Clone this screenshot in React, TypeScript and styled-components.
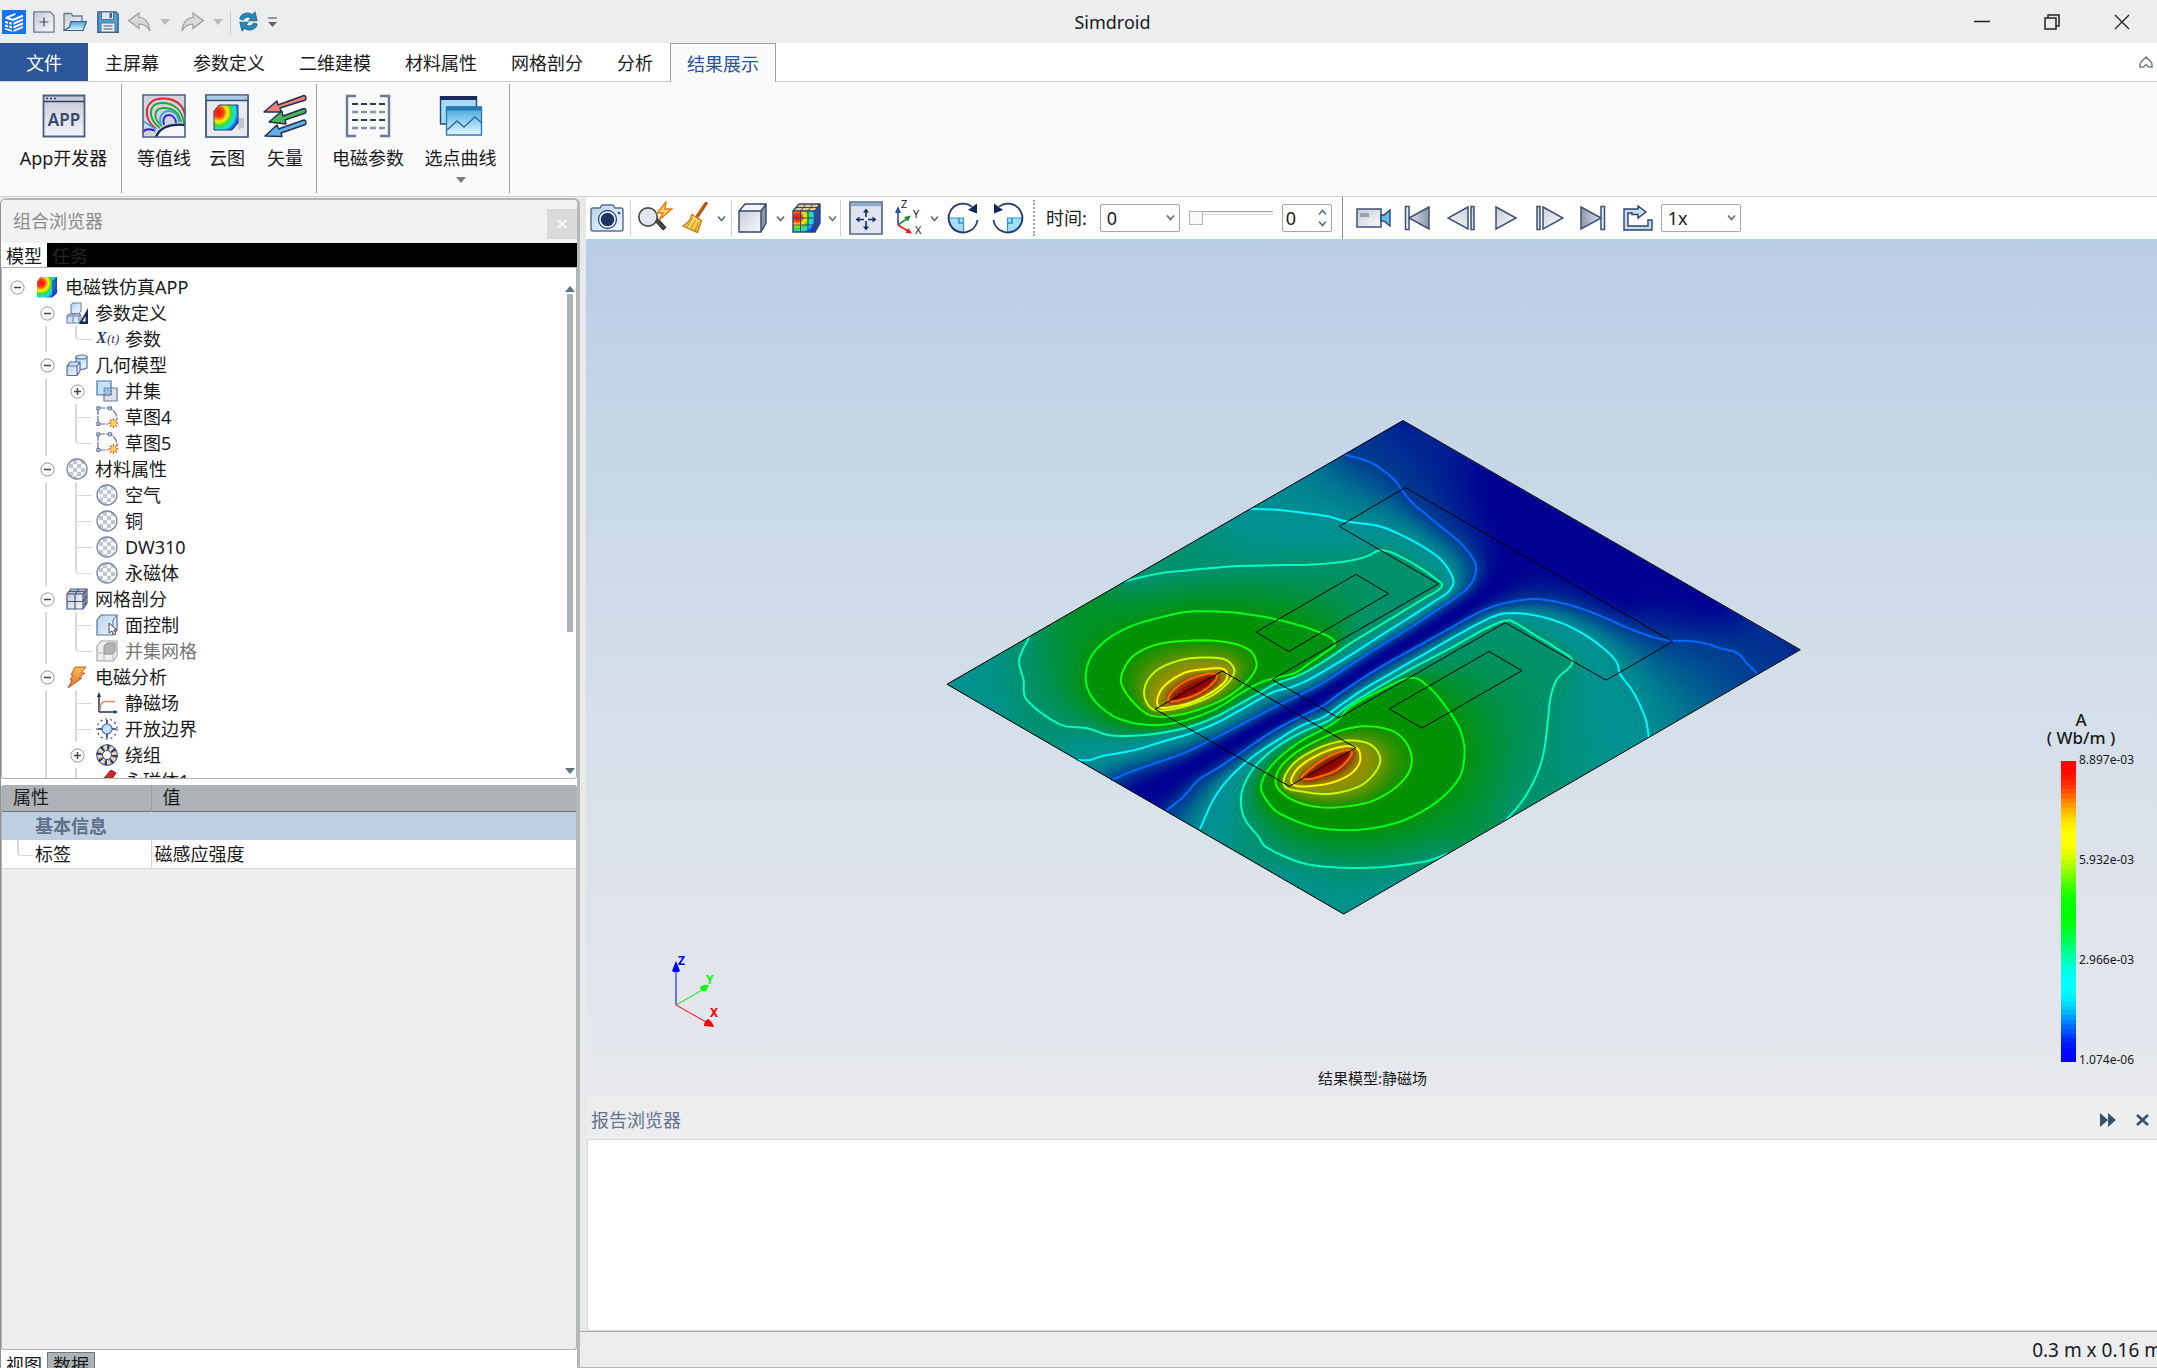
import React, { useLayoutEffect, useRef, useState } from 'react';
import styled, { createGlobalStyle } from 'styled-components';

const GlobalStyle = createGlobalStyle`
  * { box-sizing: border-box; }
  html, body, #root { height: 100%; }
  body {
    margin: 0;
    overflow: hidden;
    font-family: "Noto Sans", "Noto Sans CJK SC", sans-serif;
    font-size: 18px;
    line-height: 26px;
    color: #1a1a1a;
    background: #ecedef;
  }
  button, input, select { font: inherit; color: inherit; margin: 0; padding: 0; }
  button { border: 0; background: none; white-space: nowrap; }
  ul { list-style: none; margin: 0; padding: 0; }
  svg { display: block; flex: none; }
`;

/* ---------- window frame ---------- */

const Window = styled.div`
  display: flex;
  flex-direction: column;
  height: 100vh;
  overflow: hidden;
`;

const TitleBar = styled.header`
  display: flex;
  align-items: center;
  height: 43px;
  flex: none;
  background: #ecedef;
`;

const QuickAccess = styled.div`
  display: flex;
  align-items: center;
  width: 278px;
  height: 100%;
  padding-left: 2px;
`;

const QuickButton = styled.button<{ $width: number }>`
  display: flex;
  align-items: center;
  width: ${(p) => p.$width}px;
  height: 32px;
`;

const QuickDivider = styled.span`
  width: 1px;
  height: 24px;
  margin: 0 8px 0 4px;
  background: #cfcfcf;
`;

const WindowTitle = styled.h1`
  flex: 1;
  margin: 0;
  text-align: center;
  font-size: 18px;
  font-weight: 400;
`;

const WindowControls = styled.div`
  display: flex;
`;

const WindowControl = styled.button`
  display: grid;
  place-items: center;
  width: 70px;
  height: 43px;
`;

const TabStrip = styled.nav`
  display: flex;
  height: 39px;
  flex: none;
  background: #fff;
  border-bottom: 1px solid #d0d0d0;
`;

const FileTab = styled.button`
  width: 88px;
  height: 38px;
  padding-top: 2px;
  background: #2b579a;
  color: #fff;
`;

const RibbonTab = styled.button<{ $active?: boolean }>`
  height: ${(p) => (p.$active ? 39 : 38)}px;
  padding: 2px ${(p) => (p.$active ? 16 : 17)}px 0;
  ${(p) =>
    p.$active &&
    `
    color: #2b579a;
    background: #fafafa;
    border: 1px solid #a0a0a0;
    border-bottom: 0;
  `}
`;

const CollapseButton = styled.button`
  margin-left: auto;
  padding: 0 4px 0 8px;
`;

const Ribbon = styled.div`
  display: flex;
  height: 115px;
  flex: none;
  padding-top: 2px;
  background: #fafafa;
  border-bottom: 1px solid #d0d0d0;
`;

const RibbonGroup = styled.div<{ $gap?: number }>`
  display: flex;
  gap: ${(p) => p.$gap ?? 2}px;
  height: 109px;
  padding: 0 3px 0 9px;
  border-right: 1px solid #a0a0a0;
`;

const RibbonButton = styled.button<{ $width?: number }>`
  display: flex;
  flex-direction: column;
  align-items: center;
  min-width: ${(p) => p.$width ?? 56}px;
  padding: 10px 6px 0;
  svg + span { margin-top: 7px; }
  span + svg { margin-top: 6px; }
`;

const Body = styled.div`
  display: flex;
  flex: 1;
  min-height: 0;
`;

/* ---------- left dock ---------- */

const Dock = styled.aside`
  display: flex;
  flex-direction: column;
  width: 580px;
  flex: none;
  margin-top: 1px;
  background: #fff;
  border: 2px solid #b6b7b9;
  border-right-width: 3px;
  border-bottom: 0;
  border-left: 1px solid #8f9092;
  border-radius: 6px 6px 0 0;
  overflow: hidden;
`;

const DockHeader = styled.div`
  display: flex;
  align-items: center;
  justify-content: space-between;
  height: 43px;
  flex: none;
  padding: 0 0 2px 12px;
  background: #f2f2f2;
  color: #8c8c8c;
`;

const DockClose = styled.button`
  display: grid;
  place-items: center;
  width: 30px;
  height: 30px;
  margin-top: 6px;
  background: #dadada;
`;

const DockTabs = styled.div`
  display: flex;
  height: 24px;
  flex: none;
  background: #000;
`;

const DockTab = styled.button<{ $active?: boolean }>`
  height: 24px;
  padding: 0 5px;
  color: ${(p) => (p.$active ? '#1a1a1a' : '#242424')};
  background: ${(p) => (p.$active ? '#fff' : '#000')};
`;

const TreePane = styled.div`
  display: flex;
  height: 512px;
  flex: none;
  border: 1px solid #b2b2b2;
  border-radius: 0 0 3px 3px;
  overflow: hidden;
`;

const TreeList = styled.ul`
  flex: 1;
  padding-top: 6px;
`;

const TreeRow = styled.li<{ $dim?: boolean }>`
  display: flex;
  align-items: center;
  height: 26px;
  color: ${(p) => (p.$dim ? '#747474' : '#1a1a1a')};
`;

const TreeIcon = styled.span`
  display: grid;
  place-items: center;
  width: 22px;
  margin: 0 7px 0 4px;
`;

const Guide = styled.span<{ $kind: 'none' | 'line' | 'tee' }>`
  width: 30px;
  height: 26px;
  background-repeat: no-repeat;
  ${(p) =>
    p.$kind === 'line' &&
    `background-image: linear-gradient(#dadada, #dadada); background-size: 2px 100%; background-position: 13px 0;`}
  ${(p) =>
    p.$kind === 'tee' &&
    `background-image: linear-gradient(#dadada, #dadada), linear-gradient(#dadada, #dadada);
     background-size: 2px 100%, 16px 1px; background-position: 13px 0, 14px 13px;`}
`;

const Elbow = styled.span`
  width: 17px;
  height: 14px;
  margin: 0 0 12px 13px;
  border-left: 2px solid #dadada;
  border-bottom: 1px solid #dadada;
  border-bottom-left-radius: 4px;
`;

const ToggleCell = styled.button`
  display: grid;
  place-items: center;
  width: 30px;
  height: 26px;
`;

const ScrollRail = styled.div`
  display: flex;
  flex-direction: column;
  align-items: center;
  width: 13px;
  padding: 18px 0 4px;
`;

const ScrollThumb = styled.div`
  width: 6px;
  height: 338px;
  margin: 2px 0 auto;
  background: #adb2b6;
`;

const PropertyPane = styled.div`
  flex: 1;
  min-height: 0;
  margin-top: 6px;
  background: #ecedef;
  border: 1px solid #b2b5b7;
  border-top: 0;
  border-radius: 3px;
`;

const PropertyTable = styled.table`
  width: 100%;
  border-collapse: collapse;
  table-layout: fixed;
  text-align: left;
  th, td { padding: 0; font-weight: 400; }
  thead tr { height: 26px; background: #adb2b6; border-bottom: 1px solid #74787b; }
  thead th { padding: 0 11px; line-height: 25px; }
  thead th + th { border-left: 1px solid #979c9f; }
  tbody td { border-bottom: 1px solid #d4d4d4; background: #fff; padding: 0 3px; line-height: 28px; }
  tbody td + td { border-left: 1px solid #d4d4d4; }
`;

const NameColumn = styled.col`
  width: 149px;
`;

const SectionCell = styled.th`
  && {
    padding: 0 33px;
    line-height: 28px;
    font-weight: 700;
    color: #5f7089;
    background: #bdcfe0;
  }
`;

const BranchLabel = styled.span`
  display: flex;
  height: 28px;
  gap: 2px;
`;

const BranchElbow = styled.span`
  width: 16px;
  height: 16px;
  margin-left: 12px;
  border-left: 2px solid #dadada;
  border-bottom: 1px solid #dadada;
  border-bottom-left-radius: 4px;
`;

const BottomTabs = styled.div`
  display: flex;
  align-items: flex-start;
  height: 18px;
  flex: none;
  padding-top: 2px;
  overflow: hidden;
`;

const BottomTab = styled.button<{ $active?: boolean }>`
  height: 26px;
  line-height: 24px;
  padding: 0 5px;
  ${(p) => p.$active && `background: #adb2b6; border: 1px solid #74787b;`}
`;

/* ---------- right area ---------- */

const Stage = styled.main`
  display: flex;
  flex-direction: column;
  flex: 1;
  min-width: 0;
`;

const StageInner = styled.div`
  display: flex;
  flex-direction: column;
  flex: 1;
  min-height: 0;
  padding-left: 6px;
  background: #e8e9eb;
`;

const Toolbar = styled.div`
  display: flex;
  align-items: center;
  height: 42px;
  flex: none;
  background: #fff;
`;

const Tool = styled.button<{ $width?: number }>`
  display: grid;
  place-items: center;
  width: ${(p) => p.$width ?? 42}px;
  height: 40px;
`;

const Divider = styled.span<{ $dotted?: boolean; $tall?: boolean }>`
  width: 1px;
  height: ${(p) => (p.$tall ? 42 : 36)}px;
  margin: 0 ${(p) => (p.$tall ? 10 : 2)}px;
  border-left: ${(p) => (p.$dotted ? '2px dotted #a0a0a0' : p.$tall ? '1px solid #8c8c8c' : '1px solid #cfcfcf')};
`;

const TimeLabel = styled.label`
  margin: 0 13px 0 9px;
`;

const SelectBox = styled.span`
  position: relative;
  width: 80px;
  height: 28px;
  svg { position: absolute; right: 5px; top: 10px; pointer-events: none; }
`;

const Select = styled.select`
  appearance: none;
  width: 100%;
  height: 100%;
  padding: 0 6px;
  border: 1px solid #a6a6a6;
  border-radius: 2px;
  background: #fff;
`;

const Slider = styled.input`
  appearance: none;
  width: 84px;
  height: 20px;
  margin: 0 9px;
  background: none;
  &::-webkit-slider-runnable-track {
    height: 14px;
    border-top: 1px solid #a6a6a6;
    background: linear-gradient(#f6f6f6 2px, #dcdcdc 2px, #dcdcdc 3px, transparent 3px);
  }
  &::-webkit-slider-thumb {
    appearance: none;
    width: 14px;
    height: 14px;
    margin-top: -1px;
    border: 1px solid #b4b4b4;
    background: #f8f8f8;
  }
`;

const Spinner = styled.span`
  display: flex;
  width: 50px;
  height: 28px;
  border: 1px solid #a6a6a6;
  border-radius: 2px;
`;

const SpinnerInput = styled.input`
  width: 35px;
  padding-left: 3px;
  border: 0;
  background: none;
`;

const SpinnerArrows = styled.span`
  display: flex;
  flex-direction: column;
  justify-content: space-between;
  padding: 4px 0;
`;

const SpinnerArrow = styled.button`
  display: block;
`;

const Viewport = styled.section`
  position: relative;
  display: grid;
  place-items: center;
  flex: 1;
  min-height: 0;
  background: linear-gradient(#b9cde5, #c4d5e7 19%, #d4dfe9 54%, #dfe3ec 80%, #e7e9ed);
`;

const Plot = styled.div`
  display: grid;
  width: 870px;
  height: 530px;
  > * { grid-area: 1 / 1; width: 100%; height: 100%; }
  > svg { z-index: 1; }
`;

const FieldCanvas = styled.canvas`
  clip-path: polygon(53.57% 3.51%, 99.23% 46.75%, 46.75% 96.62%, 1.15% 53.25%);
`;

const Caption = styled.p`
  position: absolute;
  left: 2px;
  right: 0;
  bottom: 4px;
  margin: 0;
  text-align: center;
  font-size: 15px;
`;

const Triad = styled.svg`
  position: absolute;
  left: 80px;
  bottom: 65px;
  font-size: 12px;
  font-weight: 700;
`;

const Legend = styled.div`
  position: absolute;
  right: 20px;
  bottom: 33px;
  width: 78px;
`;

const LegendTitle = styled.div`
  display: flex;
  flex-direction: column;
  align-items: center;
  width: 56px;
  margin: 0 0 14px -6px;
  font-size: 17px;
  line-height: 18px;
  font-weight: 500;
  white-space: nowrap;
`;

const LegendScale = styled.div`
  display: flex;
  gap: 3px;
  height: 301px;
`;

const LegendBar = styled.div`
  width: 15px;
  margin-left: 2px;
`;

const LegendTicks = styled.div`
  display: flex;
  flex-direction: column;
  justify-content: space-between;
  margin: -9px 0 -6px;
  font-size: 12px;
  line-height: 16px;
`;

const ReportHeader = styled.div`
  display: flex;
  align-items: center;
  height: 44px;
  flex: none;
  padding: 6px 8px 0 5px;
  background: #ecedef;
  color: #64748b;
  > span { flex: 1; }
`;

const ReportButton = styled.button`
  padding: 4px 0 4px 20px;
`;

const ReportBody = styled.div`
  height: 192px;
  flex: none;
  margin-left: 1px;
  background: #fff;
  border: 1px solid #d8d8d8;
  border-right: 0;
  border-radius: 3px 0 0 3px;
`;

const StatusBar = styled.footer`
  display: flex;
  align-items: center;
  justify-content: flex-end;
  height: 37px;
  flex: none;
  background: #ecedef;
  border-top: 1px solid #a4a6a8;
  border-bottom: 1px solid #b4b6b8;
  white-space: nowrap;
  font-size: 19px;
`;

const StatusText = styled.span`
  margin-right: -5px;
`;

const SharedDefs = styled.svg`
  position: absolute;
`;

/* ---------- icons ---------- */

const NAVY = '#3a4a6b';

type IconProps = { w: number; h: number; vb?: string; children: React.ReactNode };
const Icon = ({ w, h, vb, children }: IconProps) => (
  <svg width={w} height={h} viewBox={vb ?? `0 0 ${w} ${h}`} fill="none" aria-hidden="true">
    {children}
  </svg>
);

const Defs = () => (
  <SharedDefs width="0" height="0" aria-hidden="true">
    <defs>
      <radialGradient id="rainbow" cx="0.2" cy="0.3" r="0.95">
        <stop offset="0" stopColor="#f01010" />
        <stop offset="0.2" stopColor="#f43c10" />
        <stop offset="0.38" stopColor="#fff000" />
        <stop offset="0.56" stopColor="#38d838" />
        <stop offset="0.72" stopColor="#18e0f0" />
        <stop offset="0.92" stopColor="#1030e0" />
      </radialGradient>
      <linearGradient id="silver" x1="0" y1="0" x2="1" y2="1">
        <stop offset="0" stopColor="#c6cbd8" />
        <stop offset="1" stopColor="#fafafb" />
      </linearGradient>
      <linearGradient id="silverDown" x1="0" y1="0" x2="0" y2="1">
        <stop offset="0" stopColor="#c4c9d6" />
        <stop offset="1" stopColor="#f4f5f8" />
      </linearGradient>
      <linearGradient id="steel" x1="0" y1="0" x2="1" y2="0">
        <stop offset="0" stopColor="#8e96a8" />
        <stop offset="1" stopColor="#eef0f4" />
      </linearGradient>
      <linearGradient id="sky" x1="0" y1="0" x2="0" y2="1">
        <stop offset="0" stopColor="#3fa6dc" />
        <stop offset="1" stopColor="#e4f6fe" />
      </linearGradient>
      <linearGradient id="paleBlue" x1="0" y1="0" x2="1" y2="1">
        <stop offset="0" stopColor="#b6d3ee" />
        <stop offset="1" stopColor="#eff7fd" />
      </linearGradient>
      <linearGradient id="broom" x1="0" y1="0" x2="1" y2="1">
        <stop offset="0" stopColor="#fff09a" />
        <stop offset="1" stopColor="#f5b52a" />
      </linearGradient>
      <linearGradient id="bolt" x1="0" y1="0" x2="0" y2="1">
        <stop offset="0" stopColor="#f7c04a" />
        <stop offset="1" stopColor="#e8683c" />
      </linearGradient>
    </defs>
  </SharedDefs>
);

const Chevron = ({ up }: { up?: boolean }) => (
  <Icon w={9} h={7}>
    <path d={up ? 'M1 5.5 4.5 1.5 8 5.5' : 'M1 1.5 4.5 5.5 8 1.5'} stroke="#5b707c" strokeWidth="1.6" />
  </Icon>
);

const Caret = ({ color = '#7a7a7a', up }: { color?: string; up?: boolean }) => (
  <Icon w={10} h={6}>
    <path d={up ? 'M0 6 5 0l5 6z' : 'M0 0h10L5 6z'} fill={color} />
  </Icon>
);

const LogoIcon = () => (
  <Icon w={24} h={24}>
    <path d="M0 0h24v24H0z" fill="#1672ee" />
    <path d="M3 8.5 4.500 6.500 13.500 3v1.800L7 7.500l4 1.200 10-4.200v2.400l-10 4.200zM3 11l3 .8v2l-3-.8zM7 12l3 .8v2L7 14zM3 14.500l3 .8v2l-3-.8zM7 15.500l3 .8v2l-3-.8zM3 18l7 2v1.800l-7-2.300zM11.500 12.500l9.500-4v2.300l-9.500 4zM11.500 16.300l9.500-4v2.300l-9.500 4zM11.500 20l9.500-4v2l-9.500 4z" fill="#fff" />
  </Icon>
);
const NewIcon = () => (
  <Icon w={22} h={22}>
    <path d="M.8.800h16.500l3.700 4v16.400H.8z" fill="url(#silver)" stroke="#6b7891" strokeWidth="1.300" />
    <path d="M11 6.500v9M6.500 11h9" stroke={NAVY} strokeWidth="1.200" />
  </Icon>
);
const OpenIcon = () => (
  <Icon w={24} h={20}>
    <path d="M1 18V1.500h7l2 2.500h9v6" fill="url(#silver)" stroke="#6b7891" strokeWidth="1.300" />
    <path d="M1 18.500 6.500 15 8 9.500h15.500L20 18.500z" fill="url(#sky)" stroke="#3c5f86" strokeWidth="1.200" />
  </Icon>
);
const SaveIcon = () => (
  <Icon w={22} h={22}>
    <path d="M.8.800h18l2.400 2.500v18H.8z" fill="#4a9fd6" stroke="#41587d" strokeWidth="1.300" />
    <path d="M4.500 1h12v7.500h-12z" fill="#e2e5ec" stroke="#5d6e8b" />
    <path d="M12.500 2h2.500v5h-2.500z" fill="#4a5c7c" />
    <path d="M4 12h14v9H4z" fill="#eceef3" stroke="#5d6e8b" />
    <path d="M6.500 15h9M6.500 18h9" stroke="#7d899e" strokeWidth="1.300" />
  </Icon>
);
const UndoIcon = ({ flip }: { flip?: boolean }) => (
  <Icon w={23} h={20}>
    <g transform={flip ? 'translate(23 0) scale(-1 1)' : undefined}>
      <path d="M.8 8.500 11 1v4.500c7 0 10 6 11 13.500-2.500-5-6-7-11-7v4.500z" fill="#d9d9da" stroke="#9c9c9c" strokeWidth="1.200" />
    </g>
  </Icon>
);
const RefreshIcon = () => (
  <Icon w={19} h={21}>
    <g fill="#2787ba" stroke="#1a5f88" strokeWidth=".8">
      <path d="M.8 8C1.500 2 9 .500 13.500 3.500L16 .800l2.200 9H9.500L12 6.800C9.500 5.500 6 5.800 4.500 9z" />
      <path d="M18.200 13c-.7 6-8.200 7.500-12.700 4.500L3 20.200.8 11.200h8.700L7 14.200c2.500 1.300 6 1 7.500-2.200z" />
    </g>
  </Icon>
);

const AppIcon = () => (
  <Icon w={44} h={44}>
    <path d="M1.500 1.500h41v41h-41z" fill="url(#silverDown)" stroke="#4f5f80" strokeWidth="1.800" />
    <path d="M2 7.500h40" stroke="#2f3f63" strokeWidth="1.600" />
    <path d="M4 4.500h2M8 4.500h2M12 4.500h2" stroke="#2f3f63" strokeWidth="1.400" />
    <text x="22" y="32" fontSize="17" fontWeight="600" textAnchor="middle" fill={NAVY}>APP</text>
  </Icon>
);
const ContourIcon = () => (
  <Icon w={44} h={44}>
    <path d="M1 1h42v42H1z" fill="#cfd4e0" />
    <path d="M15 43C17 35 25 30 43 31v12z" fill="#f6f6f8" />
    <path d="M14 35C0 24 2 5 20 4.500 32 4 41 10 43 21" stroke="#e02530" strokeWidth="2" />
    <path d="M18 34C5 24 6 9 20 9c12 0 20 7 22 20M20 32C10 24 12 14 22 14c9 0 15 5 17 14" stroke="#21a336" strokeWidth="1.800" />
    <path d="M19 30c-3-7 2-13 8-13 5 0 9 4 10 11" stroke="#39a5e0" strokeWidth="1.800" />
    <path d="M22 31c-2-6 1-10 5-10s7 4 7 8M1 38c3-4 9-3 12-1" stroke="#3024c8" strokeWidth="1.800" />
    <path d="M1 27c4 2 10 7 13 8" stroke="#39a5e0" strokeWidth="1.800" />
    <path d="M14 43c3-8 12-14 29-12" stroke="#1b2a50" strokeWidth="2.400" />
    <path d="M1 1h42v42H1z" stroke="#4f5f80" strokeWidth="1.600" />
  </Icon>
);
const CloudIcon = () => (
  <Icon w={44} h={44}>
    <path d="M1 1h42v42H1z" fill="#e9eaee" stroke="#3b4c70" strokeWidth="1.700" />
    <path d="M1.800 1.800h40.400V6H1.800z" fill="#a9cbe8" />
    <path d="M1 6.500h42" stroke="#3b4c70" strokeWidth="1.400" />
    <path d="M33 24h6v9l-6 3z" fill="#c2c4ca" />
    <path d="M9 17l5-6h19v18l-6 7H9z" fill="url(#rainbow)" stroke="#26406a" />
  </Icon>
);
const VectorIcon = () => (
  <Icon w={44} h={44}>
    <g stroke="#1f2f52" strokeWidth="1.400" strokeLinejoin="round">
      <path d="M1 18 14 7l1 4 26-9.500q3 1 1.500 4.500L17 14l1 4z" fill="#ee7f74" />
      <path d="M6 28 19 17l1 5 21-7.500q3 1 1.500 4.500L22 26l1 4z" fill="#49b755" />
      <path d="M2 42 14 31l1.500 4 25.500-9q3 1 1.500 4.500L18 39l1 3.500z" fill="#62b0ea" />
    </g>
  </Icon>
);
const EmParamIcon = () => (
  <Icon w={46} h={44}>
    <path d="M11 2H2v40h9M35 2h9v40h-9" stroke="#6b7a99" strokeWidth="2.400" />
    <path d="M7 10h33M7 26h33" stroke="#2b3b60" strokeWidth="1.800" strokeDasharray="6 3" />
    <path d="M7 18h33M7 34h33" stroke="#8793ac" strokeWidth="2.400" strokeDasharray="6 3" />
  </Icon>
);
const CurveIcon = () => (
  <Icon w={44} h={44}>
    <path d="M1.500 3h36v27h-36z" fill="#a7daf4" stroke="#2a4470" strokeWidth="1.400" />
    <path d="M1 2h37v4H1z" fill="#1a2d5c" />
    <path d="M7.500 13h35v28h-35z" fill="url(#sky)" stroke="#2f7db8" strokeWidth="1.400" />
    <path d="M7 12.500h36v4H7z" fill="#2579b5" />
    <path d="M8 36 18 27l7 6 11-10 7 6" stroke="#2a6fa5" strokeWidth="1.500" />
  </Icon>
);

/* toolbar icons */
const CameraIcon = () => (
  <Icon w={34} h={28}>
    <path d="M1 6Q1 4 3 4h7l2-3h11l2 3h6q2 0 2 2v19q0 2-2 2H3q-2 0-2-2z" fill="url(#paleBlue)" stroke="#5a7098" strokeWidth="1.500" />
    <circle cx="17.500" cy="15.500" r="9" fill="#f4f8fc" stroke="#2c477a" strokeWidth="1.300" />
    <circle cx="17.500" cy="15.500" r="6.800" fill="#1e3564" />
    <circle cx="29" cy="9" r="1.300" fill="#2c477a" />
  </Icon>
);
const ZoomIcon = () => (
  <Icon w={36} h={34}>
    <path d="M18 20l8 9 3-2.500-8-9z" fill="#444" stroke="#222" />
    <circle cx="11" cy="16" r="9.200" fill="#e3e6ee" stroke="#4b4b4b" strokeWidth="1.700" />
    <path d="M29 1 20 12h6l-4 7 13-11h-7z" fill="#fbd36a" stroke="#e8771c" strokeWidth="1.400" />
  </Icon>
);
const BroomIcon = () => (
  <Icon w={28} h={32}>
    <path d="M25 1.500 16.500 14" stroke="#b45c14" strokeWidth="3.400" strokeLinecap="round" />
    <path d="M11 12.500l9.500 6-4 12L2 24q7-4 9-11.500z" fill="url(#broom)" stroke="#c37a15" strokeWidth="1.300" />
    <path d="M11.500 16 6 25M14.500 18 10 27M17.500 20 14 29" stroke="#c98a1e" />
  </Icon>
);
const CubeIcon = ({ rainbow }: { rainbow?: boolean }) => (
  <Icon w={30} h={31}>
    <path d="M1 8 7 1h21v19l-5 9H1z" fill={rainbow ? '#86c98c' : '#f3f4f7'} />
    <path d="M1 8h22v21H1z" fill={rainbow ? 'url(#rainbow)' : 'url(#silver)'} />
    <path d="M23 8l5-7v19l-5 9z" fill={rainbow ? '#244bd0' : '#8e96a8'} />
    {rainbow && <path d="M1 8 7 1h21l-5 7z" fill="#e6c88a" />}
    <path d="M1 8 7 1h21v19l-5 9H1zM1 8h22v21M23 8l5-7" stroke="#33456c" strokeWidth="1.400" />
    {rainbow && <path d="M8.500 29V8L14 1M16 29V8l5-7M1 15h22l5-7M1 22h22l5-7M4 4.500h21.500V25" stroke="#33456c" />}
  </Icon>
);
const PanIcon = () => (
  <Icon w={34} h={34}>
    <path d="M1 1h32v32H1z" fill="#dfe3ec" stroke="#566889" strokeWidth="1.700" />
    <path d="M1.800 1.800h30.400v3.400H1.800z" fill="#8fabd2" />
    <path d="M17 9v7M17 20v7M8 18.500h7M19 18.500h7" stroke="#1b2f5c" strokeWidth="1.600" />
    <path d="M17 7.500l3 4h-6zM17 29.500l3-4h-6zM6.500 18.500l4-3v6zM27.500 18.500l-4-3v6z" fill="#1b2f5c" />
  </Icon>
);
const AxesIcon = () => (
  <Icon w={30} h={36}>
    <path d="M5 25V8" stroke="#2450a8" strokeWidth="1.600" />
    <path d="M5 6l3 7H2z" fill="#2450a8" />
    <path d="M5 25l10-7" stroke="#1f8a3e" strokeWidth="1.600" />
    <path d="M18 15.500l-3 6-4-4.500z" fill="#1f8a3e" />
    <path d="M5 25l10 6" stroke="#e02020" strokeWidth="1.600" />
    <path d="M19 33.500l-6.500-.5 3-5z" fill="#e02020" />
    <g fill="#222" fontSize="11">
      <text x="8" y="8">Z</text>
      <text x="20" y="18">Y</text>
      <text x="22" y="34">X</text>
    </g>
  </Icon>
);
const RotateIcon = ({ flip }: { flip?: boolean }) => (
  <Icon w={32} h={32}>
    <g transform={flip ? 'translate(32 0) scale(-1 1)' : undefined}>
      <path d="M1.500 16h15v14q-13-1-15-14z" fill="#a6dcf6" stroke="#2b95cf" strokeWidth="1.200" />
      <path d="M12 16v5h4.500" stroke="#2b95cf" strokeWidth="1.600" />
      <path d="M30.500 18A14.500 14.500 0 1 1 25 4.600" stroke="#22396b" strokeWidth="1.800" />
      <path d="M30 1.500v10l-9-3.500z" fill="#14275a" />
    </g>
  </Icon>
);
const VideoIcon = () => (
  <Icon w={36} h={20}>
    <path d="M1 1h24v18H1z" fill="url(#silver)" stroke="#3e5076" strokeWidth="1.500" />
    <path d="M4 5h9v4H4z" fill="#9aa3b5" />
    <path d="M25 7h3l6-5v16l-6-5h-3z" fill="#6bb6e4" stroke="#27496f" strokeWidth="1.400" />
  </Icon>
);
const PlayerIcon = ({ kind }: { kind: 'first' | 'prev' | 'play' | 'next' | 'last' }) => {
  const flip = kind === 'first' || kind === 'prev';
  const ends = kind === 'first' || kind === 'last';
  return (
    <Icon w={28} h={26}>
      <g transform={flip ? 'translate(28 0) scale(-1 1)' : undefined} stroke="#3e5076" strokeWidth="1.500">
        {ends && <path d="M2 2l20 11L2 24zM22 1.500h3.500v23H22z" fill="url(#steel)" />}
        {kind === 'play' && <path d="M4 2l20 11L4 24z" fill="url(#silver)" />}
        {!ends && kind !== 'play' && <path d="M7 2l20 11L7 24zM1 1.500h3v23H1z" fill="url(#silver)" />}
      </g>
    </Icon>
  );
};
const LoopIcon = () => (
  <Icon w={30} h={26}>
    <path d="M9 8H5v13h20v-6h4v10H1V4h14V1l8 6-8 6V9.500H9z" fill="#c9dcef" stroke="#2c4270" strokeWidth="1.400" />
  </Icon>
);

/* tree icons */
const RootIcon = () => (
  <Icon w={22} h={22}>
    <path d="M1 6l3-5h17v16l-5 4.500H1z" fill="url(#rainbow)" />
    <path d="M16 21.500V5L21 1v16z" fill="#1a36d8" opacity=".7" />
  </Icon>
);
const DefineIcon = () => (
  <Icon w={22} h={22}>
    <g fill="url(#paleBlue)" stroke="#6d83a6" strokeWidth="1.100">
      <path d="M5 3l2-2h8v8l-2 2.500H5z" />
      <path d="M1 14l2-2h10l2 1v6l-2 2H1z" />
    </g>
    <path d="M1 14h12v7M7 12v9M13 14l2-2" stroke="#6d83a6" />
    <path d="M22 6v16h-9z" fill="#14285c" />
    <path d="M19.500 14v5.500h-3z" fill="#fff" />
  </Icon>
);
const XtIcon = () => (
  <Icon w={24} h={20}>
    <text x="0" y="14" fontFamily="Liberation Serif, serif" fontStyle="italic" fontWeight="700" fontSize="16" fill="#2b3d66">X</text>
    <text x="11" y="14" fontFamily="Liberation Serif, serif" fontStyle="italic" fontSize="13" fill="#2b3d66">(t)</text>
  </Icon>
);
const GeometryIcon = () => (
  <Icon w={22} h={22}>
    <g fill="url(#paleBlue)" stroke="#5b7298" strokeWidth="1.200">
      <path d="M10 3v11q5 3 11 0V3z" />
      <ellipse cx="15.500" cy="3" rx="5.500" ry="2" />
      <path d="M1 12l3-4h10v9l-3 4.500H1zM1 12h10v9.500M11 12l3-4" />
    </g>
  </Icon>
);
const UnionIcon = () => (
  <Icon w={22} h={22}>
    <path d="M8 8h13v13H8z" fill="#dfe1ea" stroke="#6b7a9c" strokeWidth="1.200" />
    <path d="M1 1h14v14H1z" fill="#c5e2f6" stroke="#4f6f9e" strokeWidth="1.200" />
    <path d="M8 8h7v7H8z" fill="#9fbcd9" stroke="#4f6f9e" strokeDasharray="2 1" />
  </Icon>
);
const SketchIcon = () => (
  <Icon w={22} h={22}>
    <path d="M2 2v16M2 2h12q7 4 7 12M2 18h10" stroke="#5f7296" strokeWidth="1.200" strokeDasharray="7 1" />
    <path d="M.8.800h3v3h-3zM12.500.800h3v3h-3zM.8 16.500h3v3h-3z" fill="#c9d3e4" stroke="#5f7296" />
    <path d="M17.500 12v10M12.500 17h10M14 13.500l7 7M21 13.500l-7 7" stroke="#ee5a24" strokeWidth="1.300" />
    <circle cx="17.500" cy="17" r="2.600" fill="#ffd24c" />
  </Icon>
);
const MaterialIcon = () => (
  <Icon w={22} h={22}>
    <circle cx="11" cy="11" r="10" fill="#f7f8fa" />
    <path d="M7 2h4v4H7zM15 3h3v3h-3zM3 6h4v4H3zM11 6h4v4h-4zM7 10h4v4H7zM15 10h4v4h-4zM3 14h4v4H3zM11 14h4v4h-4zM7 18h4v2H7z" fill="#c3c7d2" />
    <circle cx="11" cy="11" r="10" stroke="#76859f" strokeWidth="1.300" />
  </Icon>
);
const MeshIcon = () => (
  <Icon w={22} h={22}>
    <path d="M1 6l4-5h16v14l-4 6H1z" fill="#b9c1d1" />
    <path d="M1 6h16v15H1z" fill="url(#silver)" />
    <path d="M1 6l4-5h16v14l-4 6H1zM1 6h16v15M17 6l4-5M9 21V6l4-5M1 13.500h16l4-5.500M3 3.500h16V18" stroke="#46587c" strokeWidth="1.200" />
  </Icon>
);
const FaceIcon = () => (
  <Icon w={22} h={22}>
    <path d="M1 6l4-5h16v15l-4 5H1z" fill="url(#paleBlue)" stroke="#5b7298" strokeWidth="1.200" />
    <path d="M17 21V6l4-5" stroke="#5b7298" />
    <path d="M13 9v10l3-2 2 4 2-1-2-4h3z" fill="#fff" stroke="#444" />
  </Icon>
);
const MeshDimIcon = () => (
  <Icon w={22} h={22}>
    <path d="M1 6l4-5h16v15l-4 5H1z" fill="#eee" stroke="#a6a6a6" strokeWidth="1.200" />
    <path d="M8 6l3-3h8v8l-2 3H8z" fill="#b5b5b5" stroke="#8e8e8e" />
    <path d="M1 13h7M8 13v8M17 14v7" stroke="#b8b8b8" />
  </Icon>
);
const BoltIcon = () => (
  <Icon w={22} h={22}>
    <path d="M9 1h11l-5 6h4l-6 5h3L2 22l4-8H4l3-5H5z" fill="url(#bolt)" stroke="#b3572c" strokeWidth=".9" />
  </Icon>
);
const StaticIcon = () => (
  <Icon w={22} h={22}>
    <path d="M3 20V3M3 20h17" stroke="#1d3160" strokeWidth="1.500" />
    <path d="M3 0l2 5H1zM22 20l-4-2v4z" fill="#1d3160" />
    <path d="M4 19Q4 10 9 9.500h10" stroke="#e08468" strokeWidth="1.300" />
  </Icon>
);
const OpenBoundIcon = () => (
  <Icon w={22} h={22}>
    <circle cx="11" cy="11" r="10" stroke="#31456f" strokeWidth="1.200" strokeDasharray="2 3" />
    <circle cx="11" cy="11" r="5" fill="#bfe0f7" stroke="#5b7298" strokeWidth="1.200" />
    <path d="M11 2v4M11 16v4M2 11h4M16 11h4" stroke="#22396b" strokeWidth="1.600" />
  </Icon>
);
const WindingIcon = () => (
  <Icon w={22} h={22}>
    <circle cx="11" cy="11" r="7.500" stroke="#d8dce6" strokeWidth="6" />
    <circle cx="11" cy="11" r="7.500" stroke="#22335a" strokeWidth="6" strokeDasharray="2 3.890" />
    <circle cx="11" cy="11" r="7.500" stroke="#e59a3a" strokeWidth="5" strokeDasharray="1 4.890" strokeDashoffset="-2" />
    <circle cx="11" cy="11" r="10.300" stroke="#31456f" />
    <circle cx="11" cy="11" r="4.500" stroke="#31456f" />
  </Icon>
);
const MagnetIcon = () => (
  <Icon w={22} h={22}>
    <path d="M3 14 15 0l5 3L9 18z" fill="#d8242c" stroke="#8c1a20" />
  </Icon>
);
const ToggleIcon = ({ open }: { open: boolean }) => (
  <Icon w={15} h={15}>
    <circle cx="7.500" cy="7.500" r="6.600" fill="#fff" stroke="#999" />
    <path d={open ? 'M4 7.500h7' : 'M4 7.500h7M7.500 4v7'} stroke="#444" strokeWidth="1.500" />
  </Icon>
);

/* ---------- field plot ---------- */

type Point = [number, number];
type Contour = { level: number; points: Point[]; closed?: boolean };

const parse = (s: string): Point[] => s.split(' ').map((p) => p.split(',').map(Number) as Point);

const rawContours: Contour[] = [
  { level: 1, points: parse('728,162 775,185 800,212 820,240 832,268 850,305 870,332 905,380 935,420 955,458 965,490 963,525 950,558 925,590 905,612 850,672 790,732 735,790 690,838 640,880 600,912 550,955 490,1005 440,1045 380,1080 340,1103 308,1126') },
  { level: 2, points: parse('558,323 605,326 650,334 700,346 730,360 790,374 830,400 870,435 900,470 917,505 925,540 915,570 895,592 850,640 790,702 740,755 700,795 660,832 630,852 600,865 550,910 500,955 450,988 400,1012 350,1037 290,1055 270,1066 245,1066') },
  { level: 3, points: parse('330,538 395,514 440,506 520,494 600,490 680,487 740,476 770,463 795,445 830,465 870,503 895,533 904,545 900,560 870,590 800,660 740,720 700,765 665,800 640,820 605,840 575,868 540,900 490,943 440,972 370,992 305,993 265,972 217,962 155,887 150,830 142,770 160,703') },
  { level: 4, closed: true, points: parse('712,718 670,680 600,648 530,630 467,626 435,630 352,665 300,710 270,765 262,830 275,885 310,935 352,958 400,962 450,945 500,912 545,865 580,835 600,825 640,808 665,780 690,752') },
  { level: 5, closed: true, points: parse('475,712 530,722 560,745 570,785 560,820 535,860 500,895 450,925 405,938 375,932 345,890 326,840 330,800 350,755 395,722') },
  { level: 6, closed: true, points: parse('485,763 515,770 530,800 520,835 490,875 455,900 420,915 385,918 368,880 372,835 395,795 440,768') },
  { level: 7, closed: true, points: parse('512,798 515,830 485,870 450,897 420,908 395,910 392,880 405,845 440,808 480,797') },
  { level: 8, closed: true, points: parse('497,812 490,840 465,870 440,885 413,892 415,870 435,840 465,818') },
  { level: 1, points: parse('1472,810 1455,782 1437,750 1405,735 1380,722 1350,714 1310,712 1280,700 1240,676 1190,640 1150,615 1110,598 1070,590 1030,598 1000,610 970,630 920,675 860,730 800,785 760,825 715,875 690,905 640,945 590,990 550,1035 500,1090 465,1125 440,1172 408,1215') },
  { level: 2, points: parse('1277,1000 1272,950 1260,900 1245,855 1225,812 1220,780 1205,750 1170,705 1130,668 1090,645 1050,633 1015,633 985,650 930,698 870,755 810,812 760,860 720,905 690,940 650,965 610,1005 560,1060 515,1130 490,1190 468,1270') },
  { level: 3, points: parse('1020,1243 1050,1185 1075,1110 1088,1040 1095,950 1100,880 1112,825 1140,775 1110,735 1070,695 1030,655 1015,655 980,680 920,735 850,795 780,860 740,900 715,930 700,950 650,985 600,1035 565,1090 545,1150 542,1200 550,1245 572,1290 588,1325 663,1375 770,1385 870,1368 915,1343') },
  { level: 4, closed: true, points: parse('850,822 800,855 760,888 735,915 715,950 690,975 650,1010 610,1060 585,1110 578,1150 590,1190 612,1225 680,1267 760,1272 835,1245 895,1190 935,1120 945,1040 935,970 905,895 880,850') },
  { level: 5, closed: true, points: parse('770,966 815,980 840,1015 850,1065 842,1110 815,1155 775,1190 735,1203 695,1207 655,1197 625,1175 605,1140 610,1095 640,1045 690,1000 730,975') },
  { level: 6, closed: true, points: parse('735,1008 775,1020 793,1060 785,1100 760,1140 725,1160 690,1167 655,1160 622,1147 622,1110 645,1065 690,1025') },
  { level: 7, closed: true, points: parse('748,1028 757,1065 745,1100 720,1125 685,1140 636,1140 640,1100 665,1065 710,1032') },
  { level: 8, closed: true, points: parse('740,1038 735,1065 715,1095 690,1112 653,1122 665,1095 690,1065 715,1045') },
];

/* cubic subdivision through the sampled points, three extra points per span */
function soften({ level, points, closed }: Contour): Contour {
  const n = points.length;
  const at = (i: number) => (closed ? points[(i + n) % n] : points[Math.min(n - 1, Math.max(0, i))]);
  const result: Point[] = [];
  const spans = closed ? n : n - 1;
  for (let i = 0; i < spans; i++) {
    const [a, b, c, d] = [at(i - 1), at(i), at(i + 1), at(i + 2)];
    const span = Math.hypot(c[0] - b[0], c[1] - b[1]);
    const slope = (p: Point, q: Point): Point => {
      const k = span / (Math.hypot(q[0] - p[0], q[1] - p[1]) || 1);
      return [(q[0] - p[0]) * k * 0.9, (q[1] - p[1]) * k * 0.9];
    };
    const m0 = slope(a, c);
    const m1 = slope(b, d);
    for (let s = 0; s < 4; s++) {
      const t = s / 4;
      const t2 = t * t;
      const t3 = t2 * t;
      const mix = (k: 0 | 1) =>
        (2 * t3 - 3 * t2 + 1) * b[k] + (t3 - 2 * t2 + t) * m0[k] + (3 * t2 - 2 * t3) * c[k] + (t3 - t2) * m1[k];
      result.push([mix(0), mix(1)]);
    }
  }
  if (!closed) result.push(points[n - 1]);
  return { level, closed, points: result };
}

const contours = rawContours.map(soften);

/* values known away from the contour lines: core peaks, the zero valley and the far edges */
const anchors: { value: number; points: Point[] }[] = [
  { value: 1, points: parse('422,884 490,820') },
  { value: 1, points: parse('664,1112 732,1046') },
  { value: 0, points: parse('345,1170 400,1130 480,1055 600,950 690,870 860,700 960,600 1020,520 1040,400 1000,310') },
  { value: 0, points: parse('1040,400 1180,540 1240,590') },
  { value: 0, points: parse('1000,225 1400,600') },
  { value: 0.07, points: parse('834,66 838,70') },
  { value: 0.07, points: parse('1536,736 1542,742') },
  { value: 0.28, points: parse('90,772 16,842 100,922') },
  { value: 0.28, points: parse('610,1400 727,1510 840,1410') },
];

const outline: Point[] = parse('834,62 1550,740 727,1522 12,842');
const bodies = [
  '838,260 719,375 898,545 598,828 718,942 1018,660 1200,830 1320,716',
  '749,517 808,574 628,745 569,688',
  '989,745 1048,802 868,972 809,915',
  '508,803 749,1030 629,1144 387,916',
];

const SPAN = 1568;
const ORIGIN: Point = [-6, 7];
const stops = [
  [0, 0, 255],
  [0, 255, 255],
  [0, 255, 0],
  [255, 255, 0],
  [255, 0, 0],
];

function colorAt(value: number, gain = 1): number[] {
  const v = Math.min(0.9999, Math.max(0, value)) * 4;
  const i = Math.floor(v);
  const t = (1 - Math.cos(Math.PI * (v - i))) / 2;
  return stops[i].map((c, k) => Math.round((c + (stops[i + 1][k] - c) * t) * gain));
}

const rgb = (c: number[]) => `rgb(${c.join(',')})`;

function insideOutline(x: number, y: number, slack: number) {
  return outline.every(([ax, ay], i) => {
    const [bx, by] = outline[(i + 1) % outline.length];
    const cross = (bx - ax) * (y - ay) - (by - ay) * (x - ax);
    return cross / Math.hypot(bx - ax, by - ay) > -slack;
  });
}

/* fills the space between contour lines by relaxing the Laplace equation */
function solveField(w: number, h: number) {
  const value = new Float32Array(w * h).fill(0.25);
  const state = new Uint8Array(w * h);
  for (let y = 0; y < h; y++)
    for (let x = 0; x < w; x++)
      if (insideOutline((x * SPAN) / w + ORIGIN[0], (y * SPAN) / h + ORIGIN[1], 14)) state[y * w + x] = 1;

  const trace = (points: Point[], v: number) => {
    for (let i = 1; i < points.length; i++) {
      const [ax, ay] = points[i - 1];
      const [bx, by] = points[i];
      const n = Math.max(1, Math.ceil(Math.hypot(bx - ax, by - ay)));
      for (let k = 0; k <= n; k++) {
        const gx = Math.round(((ax + ((bx - ax) * k) / n - ORIGIN[0]) * w) / SPAN);
        const gy = Math.round(((ay + ((by - ay) * k) / n - ORIGIN[1]) * h) / SPAN);
        if (gx < 0 || gy < 0 || gx >= w || gy >= h) continue;
        state[gy * w + gx] = 2;
        value[gy * w + gx] = v;
      }
    }
  };
  anchors.forEach((a) => trace(a.points, a.value));
  contours.forEach((c) => trace(c.closed ? [...c.points, c.points[0]] : c.points, c.level / 9));

  const around = [1, -1, w, -w];
  for (let pass = 0; pass < 450; pass++) {
    for (let y = 1; y < h - 1; y++) {
      for (let x = 1; x < w - 1; x++) {
        const i = y * w + x;
        if (state[i] !== 1) continue;
        let sum = 0;
        let n = 0;
        for (let k = 0; k < 4; k++) {
          const j = i + around[k];
          if (state[j]) {
            sum += value[j];
            n++;
          }
        }
        if (n) value[i] += 1.85 * (sum / n - value[i]);
      }
    }
  }
  return value;
}

const FieldPlot = () => {
  const ref = useRef<HTMLCanvasElement>(null);
  useLayoutEffect(() => {
    const canvas = ref.current;
    const ctx = canvas?.getContext('2d');
    if (!canvas || !ctx) return;
    const { width, height } = canvas;
    const field = solveField(width, height);
    const image = ctx.createImageData(width, height);
    field.forEach((v, i) => {
      const [r, g, b] = colorAt(v, 0.57);
      image.data.set([r, g, b, 255], i * 4);
    });
    ctx.putImageData(image, 0, 0);
  }, []);
  const toPoints = (p: Point[]) => p.map((q) => q.join(',')).join(' ');
  return (
    <Plot>
      <FieldCanvas ref={ref} width={435} height={265} />
      <svg viewBox={`${ORIGIN[0]} ${ORIGIN[1]} ${SPAN} ${SPAN}`} preserveAspectRatio="none" fill="none">
        {contours.map((c, i) => {
          const line = { points: toPoints(c.points), stroke: rgb(colorAt(c.level / 9)), strokeWidth: 2, vectorEffect: 'non-scaling-stroke' };
          return c.closed ? <polygon key={i} {...line} /> : <polyline key={i} {...line} />;
        })}
        {[toPoints(outline), ...bodies].map((points) => (
          <polygon key={points} points={points} stroke="#000" strokeWidth={1} vectorEffect="non-scaling-stroke" />
        ))}
      </svg>
    </Plot>
  );
};

const BANDS = 64;
const legendGradient = `linear-gradient(to top, ${Array.from({ length: BANDS }, (_, i) => {
  const c = rgb(colorAt(i / (BANDS - 1)));
  return `${c} ${(i * 100) / BANDS}% ${((i + 1) * 100) / BANDS}%`;
}).join(', ')})`;

/* ---------- data ---------- */

const tabs = ['主屏幕', '参数定义', '二维建模', '材料属性', '网格剖分', '分析', '结果展示'];

type Node = {
  label: string;
  depth: 0 | 1 | 2;
  icon: () => React.ReactElement;
  open?: boolean;
  last?: boolean;
  dim?: boolean;
};

const nodes: Node[] = [
  { label: '电磁铁仿真APP', depth: 0, icon: RootIcon, open: true },
  { label: '参数定义', depth: 1, icon: DefineIcon, open: true },
  { label: '参数', depth: 2, icon: XtIcon, last: true },
  { label: '几何模型', depth: 1, icon: GeometryIcon, open: true },
  { label: '并集', depth: 2, icon: UnionIcon, open: false },
  { label: '草图4', depth: 2, icon: SketchIcon },
  { label: '草图5', depth: 2, icon: SketchIcon, last: true },
  { label: '材料属性', depth: 1, icon: MaterialIcon, open: true },
  { label: '空气', depth: 2, icon: MaterialIcon },
  { label: '铜', depth: 2, icon: MaterialIcon },
  { label: 'DW310', depth: 2, icon: MaterialIcon },
  { label: '永磁体', depth: 2, icon: MaterialIcon, last: true },
  { label: '网格剖分', depth: 1, icon: MeshIcon, open: true },
  { label: '面控制', depth: 2, icon: FaceIcon },
  { label: '并集网格', depth: 2, icon: MeshDimIcon, last: true, dim: true },
  { label: '电磁分析', depth: 1, icon: BoltIcon, open: true },
  { label: '静磁场', depth: 2, icon: StaticIcon },
  { label: '开放边界', depth: 2, icon: OpenBoundIcon },
  { label: '绕组', depth: 2, icon: WindingIcon, open: false },
  { label: '永磁体1', depth: 2, icon: MagnetIcon },
];

const TreeItem = ({ node }: { node: Node }) => (
  <TreeRow $dim={node.dim}>
    {node.depth > 0 && <Guide $kind="none" />}
    {node.depth > 1 && <Guide $kind="line" />}
    {node.open !== undefined ? (
      <ToggleCell aria-label={node.open ? '折叠' : '展开'} aria-expanded={node.open}>
        <ToggleIcon open={node.open} />
      </ToggleCell>
    ) : node.last ? (
      <Elbow />
    ) : (
      <Guide $kind="tee" />
    )}
    <TreeIcon>
      <node.icon />
    </TreeIcon>
    <span>{node.label}</span>
  </TreeRow>
);

const players = [
  { kind: 'first', width: 44, label: '第一帧' },
  { kind: 'prev', width: 44, label: '上一帧' },
  { kind: 'play', width: 46, label: '播放' },
  { kind: 'next', width: 42, label: '下一帧' },
  { kind: 'last', width: 44, label: '最后一帧' },
] as const;

/* ---------- application ---------- */

export default function App() {
  const [time, setTime] = useState('0');
  const [step, setStep] = useState('0');
  const [speed, setSpeed] = useState('1x');

  return (
    <Window>
      <GlobalStyle />
      <Defs />
      <TitleBar>
        <QuickAccess>
          <QuickButton $width={31} aria-label="Simdroid"><LogoIcon /></QuickButton>
          <QuickButton $width={30} aria-label="新建"><NewIcon /></QuickButton>
          <QuickButton $width={34} aria-label="打开"><OpenIcon /></QuickButton>
          <QuickButton $width={31} aria-label="保存"><SaveIcon /></QuickButton>
          <QuickButton $width={32} aria-label="撤销"><UndoIcon /></QuickButton>
          <QuickButton $width={21} aria-label="撤销列表"><Caret color="#b9b9b9" /></QuickButton>
          <QuickButton $width={32} aria-label="重做"><UndoIcon flip /></QuickButton>
          <QuickButton $width={13} aria-label="重做列表"><Caret color="#b9b9b9" /></QuickButton>
          <QuickDivider />
          <QuickButton $width={29} aria-label="刷新"><RefreshIcon /></QuickButton>
          <QuickButton $width={10} aria-label="自定义">
            <Icon w={9} h={10}>
              <path d="M0 1h9" stroke="#7a7a7a" strokeWidth="1.500" />
              <path d="M0 5h9L4.500 10z" fill="#666" />
            </Icon>
          </QuickButton>
        </QuickAccess>
        <WindowTitle>Simdroid</WindowTitle>
        <WindowControls>
          <WindowControl aria-label="最小化">
            <Icon w={16} h={16}><path d="M0 7.500h16" stroke="#222" strokeWidth="1.500" /></Icon>
          </WindowControl>
          <WindowControl aria-label="还原">
            <Icon w={16} h={16}>
              <path d="M1 4h11v11H1zM4 4V1h11v11h-3" stroke="#222" strokeWidth="1.500" />
            </Icon>
          </WindowControl>
          <WindowControl aria-label="关闭">
            <Icon w={16} h={16}><path d="M1 1l14 14M15 1 1 15" stroke="#222" strokeWidth="1.300" /></Icon>
          </WindowControl>
        </WindowControls>
      </TitleBar>

      <TabStrip>
        <FileTab>文件</FileTab>
        {tabs.map((t) => (
          <RibbonTab key={t} $active={t === '结果展示'}>{t}</RibbonTab>
        ))}
        <CollapseButton aria-label="折叠功能区">
          <Icon w={14} h={12}>
            <path d="M1 8.500Q1 7 2.500 5.500L7 1l4.500 4.500Q13 7 13 8.500V11H9.500L7 8.500 4.500 11H1z" stroke="#747c8c" strokeWidth="1.500" />
          </Icon>
        </CollapseButton>
      </TabStrip>

      <Ribbon>
        <RibbonGroup>
          <RibbonButton $width={109}><AppIcon /><span>App开发器</span></RibbonButton>
        </RibbonGroup>
        <RibbonGroup>
          <RibbonButton><ContourIcon /><span>等值线</span></RibbonButton>
          <RibbonButton><CloudIcon /><span>云图</span></RibbonButton>
          <RibbonButton><VectorIcon /><span>矢量</span></RibbonButton>
        </RibbonGroup>
        <RibbonGroup $gap={5}>
          <RibbonButton><EmParamIcon /><span>电磁参数</span></RibbonButton>
          <RibbonButton $width={91}><CurveIcon /><span>选点曲线</span><Caret /></RibbonButton>
        </RibbonGroup>
      </Ribbon>

      <Body>
        <Dock>
          <DockHeader>
            <span>组合浏览器</span>
            <DockClose aria-label="关闭面板">
              <Icon w={10} h={10}><path d="M1 1l8 8M9 1 1 9" stroke="#f6f6f6" strokeWidth="2" /></Icon>
            </DockClose>
          </DockHeader>
          <DockTabs>
            <DockTab $active>模型</DockTab>
            <DockTab>任务</DockTab>
          </DockTabs>
          <TreePane>
            <TreeList>
              {nodes.map((n) => (
                <TreeItem key={n.label + n.depth} node={n} />
              ))}
            </TreeList>
            <ScrollRail>
              <Caret up color="#5f7480" />
              <ScrollThumb />
              <Caret color="#5f7480" />
            </ScrollRail>
          </TreePane>
          <PropertyPane>
            <PropertyTable>
              <colgroup><NameColumn /><col /></colgroup>
              <thead>
                <tr><th>属性</th><th>值</th></tr>
              </thead>
              <tbody>
                <tr><SectionCell colSpan={2}>基本信息</SectionCell></tr>
                <tr>
                  <td><BranchLabel><BranchElbow />标签</BranchLabel></td>
                  <td>磁感应强度</td>
                </tr>
              </tbody>
            </PropertyTable>
          </PropertyPane>
          <BottomTabs>
            <BottomTab>视图</BottomTab>
            <BottomTab $active>数据</BottomTab>
          </BottomTabs>
        </Dock>

        <Stage>
          <StageInner>
            <Toolbar>
              <Tool aria-label="截图"><CameraIcon /></Tool>
              <Divider />
              <Tool $width={44} aria-label="缩放"><ZoomIcon /></Tool>
              <Tool $width={36} aria-label="清除"><BroomIcon /></Tool>
              <Tool $width={16} aria-label="清除选项"><Chevron /></Tool>
              <Divider />
              <Tool $width={38} aria-label="显示模式"><CubeIcon /></Tool>
              <Tool $width={16} aria-label="显示选项"><Chevron /></Tool>
              <Tool $width={38} aria-label="云图模式"><CubeIcon rainbow /></Tool>
              <Tool $width={12} aria-label="云图选项"><Chevron /></Tool>
              <Divider />
              <Tool $width={46} aria-label="平移"><PanIcon /></Tool>
              <Tool $width={38} aria-label="视角"><AxesIcon /></Tool>
              <Tool $width={14} aria-label="视角选项"><Chevron /></Tool>
              <Tool $width={44} aria-label="顺时针旋转"><RotateIcon /></Tool>
              <Tool $width={46} aria-label="逆时针旋转"><RotateIcon flip /></Tool>
              <Divider $dotted />
              <TimeLabel htmlFor="time">时间:</TimeLabel>
              <SelectBox>
                <Select id="time" value={time} onChange={(e) => setTime(e.target.value)}>
                  <option>0</option>
                </Select>
                <Chevron />
              </SelectBox>
              <Slider type="range" min="0" max="10" value={step} aria-label="时间步" onChange={(e) => setStep(e.target.value)} />
              <Spinner>
                <SpinnerInput value={step} aria-label="步数" onChange={(e) => setStep(e.target.value)} />
                <SpinnerArrows>
                  <SpinnerArrow aria-label="增加"><Chevron up /></SpinnerArrow>
                  <SpinnerArrow aria-label="减少"><Chevron /></SpinnerArrow>
                </SpinnerArrows>
              </Spinner>
              <Divider $tall />
              <Tool aria-label="录制"><VideoIcon /></Tool>
              {players.map((p) => (
                <Tool key={p.kind} $width={p.width} aria-label={p.label}><PlayerIcon kind={p.kind} /></Tool>
              ))}
              <Tool $width={46} aria-label="循环"><LoopIcon /></Tool>
              <SelectBox>
                <Select aria-label="播放速度" value={speed} onChange={(e) => setSpeed(e.target.value)}>
                  <option>1x</option>
                </Select>
                <Chevron />
              </SelectBox>
            </Toolbar>

            <Viewport>
              <FieldPlot />
              <Triad width="60" height="74" viewBox="0 0 60 74" fill="none" aria-label="坐标轴">
                <path d="M10 49V17" stroke="#0000ff" />
                <path d="M10 5l4 10q-4 3-8 0z" fill="#0000ff" />
                <path d="M10 49l28-16" stroke="#00e800" />
                <path d="M43 29l-3 6q-5 1-6-3 2-4 9-3z" fill="#00ff00" />
                <path d="M10 49l30 17" stroke="#ff0000" />
                <path d="M48 71l-10-1q0-5 4-7 4 2 6 8z" fill="#ff0000" />
                <text x="12" y="9" fill="#0000ff">Z</text>
                <text x="40" y="28" fill="#00ff00">Y</text>
                <text x="44" y="61" fill="#ff0000">X</text>
              </Triad>
              <Legend>
                <LegendTitle>
                  <span>A</span>
                  <span>( Wb/m )</span>
                </LegendTitle>
                <LegendScale>
                  <LegendBar style={{ background: legendGradient }} />
                  <LegendTicks>
                    <span>8.897e-03</span>
                    <span>5.932e-03</span>
                    <span>2.966e-03</span>
                    <span>1.074e-06</span>
                  </LegendTicks>
                </LegendScale>
              </Legend>
              <Caption>结果模型:静磁场</Caption>
            </Viewport>

            <ReportHeader>
              <span>报告浏览器</span>
              <ReportButton aria-label="移动">
                <Icon w={16} h={14}><path d="M0 0l8 7-8 7zM8 0l8 7-8 7z" fill="#3a516b" /></Icon>
              </ReportButton>
              <ReportButton aria-label="关闭报告">
                <Icon w={13} h={12}><path d="M1 1l11 10M12 1 1 11" stroke="#3a516b" strokeWidth="2.600" /></Icon>
              </ReportButton>
            </ReportHeader>
            <ReportBody />
          </StageInner>
          <StatusBar>
            <StatusText>0.3 m x 0.16 m</StatusText>
          </StatusBar>
        </Stage>
      </Body>
    </Window>
  );
}
